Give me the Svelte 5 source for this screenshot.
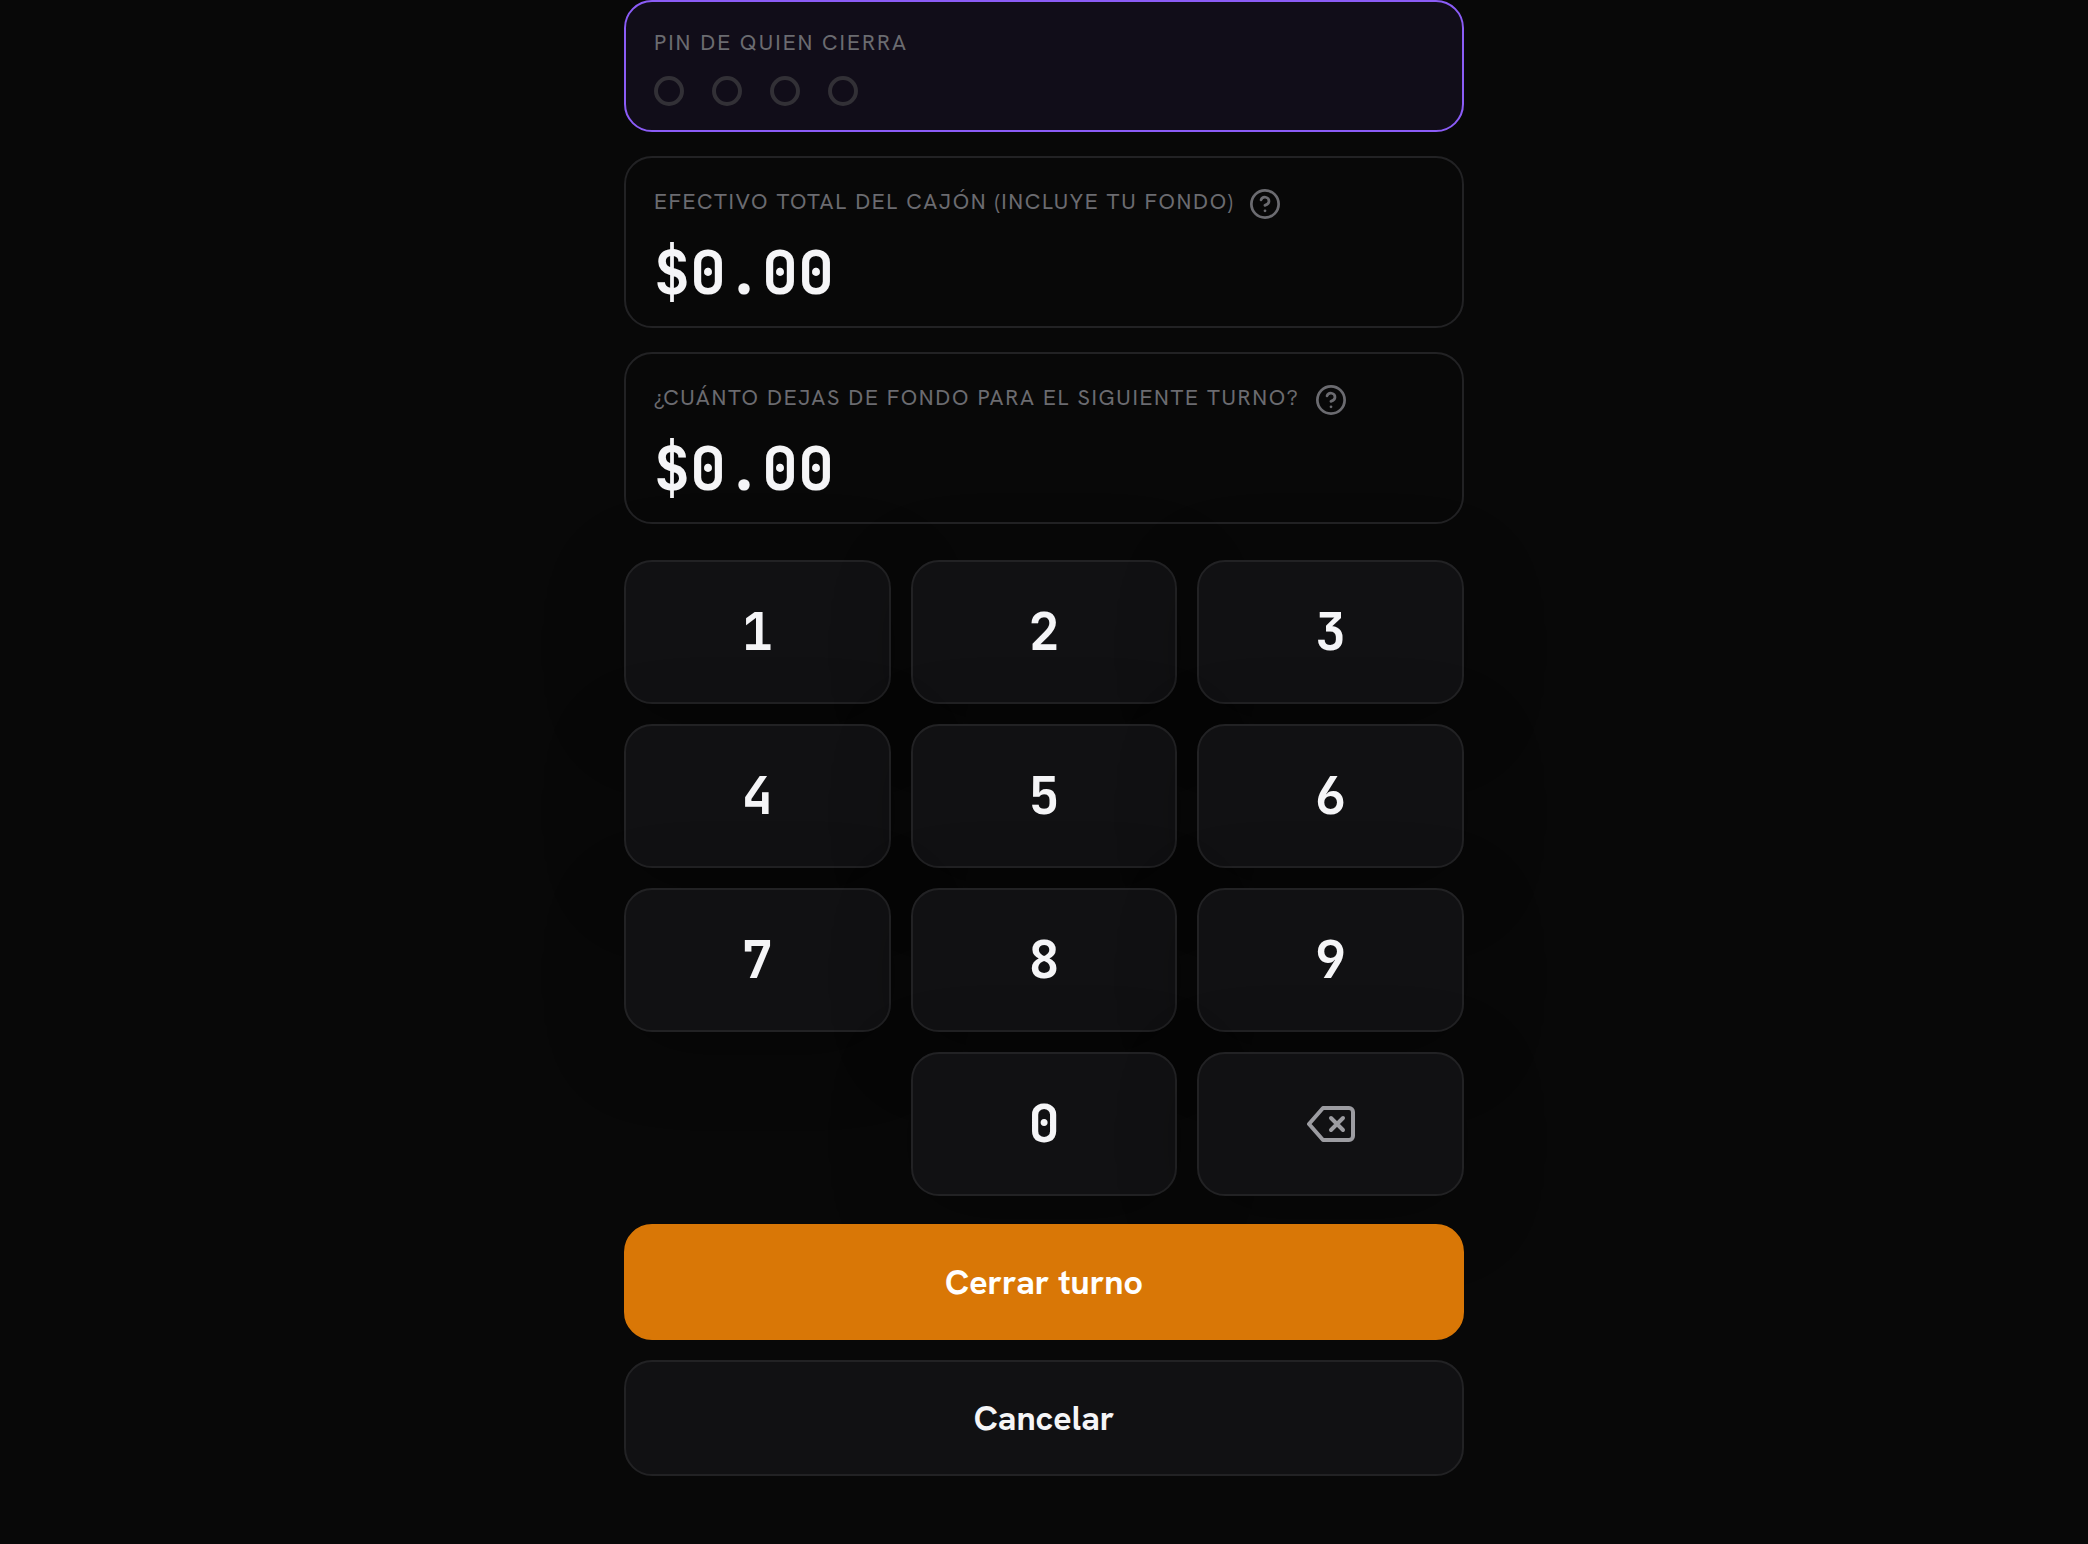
<script lang="ts">
  type Field = "pin" | "cash" | "float";

  const keys = ["1", "2", "3", "4", "5", "6", "7", "8", "9"];
  const pinLength = 4;

  let active: Field = $state("pin");
  let pin = $state("");
  let cents = $state({ cash: 0, float: 0 });

  const amounts: { id: "cash" | "float"; label: string; help: string }[] = [
    {
      id: "cash",
      label: "Efectivo total del cajón (incluye tu fondo)",
      help: "Ayuda sobre el efectivo total",
    },
    {
      id: "float",
      label: "¿Cuánto dejas de fondo para el siguiente turno?",
      help: "Ayuda sobre el fondo",
    },
  ];

  function money(value: number): string {
    return "$" + (value / 100).toFixed(2);
  }

  function press(key: string): void {
    if (active === "pin") {
      if (pin.length < pinLength) pin += key;
    } else if (cents[active] < 10000000) {
      cents[active] = cents[active] * 10 + Number(key);
    }
  }

  function erase(): void {
    if (active === "pin") pin = pin.slice(0, -1);
    else cents[active] = Math.floor(cents[active] / 10);
  }

  function reset(): void {
    pin = "";
    cents = { cash: 0, float: 0 };
    active = "pin";
  }
</script>

<main class="shift">
  <div class="fields">
    <button type="button" class="field pin" class:active={active === "pin"} onclick={() => (active = "pin")}>
      <span class="label">PIN de quien cierra</span>
      <span class="dots">
        {#each Array(pinLength) as _, i}
          <span class="dot" class:filled={i < pin.length}></span>
        {/each}
      </span>
    </button>

    {#each amounts as amount}
      <div class="field" class:active={active === amount.id}>
        <div class="label-row">
          <label class="label" for={amount.id}>{amount.label}</label>
          <button type="button" class="help" aria-label={amount.help}>
            <svg viewBox="1 1 22 22" aria-hidden="true">
              <circle cx="12" cy="12" r="10" />
              <path d="M9.09 9a3 3 0 0 1 5.83 1c0 2-3 3-3 3" />
              <path d="M12 17h.01" />
            </svg>
          </button>
        </div>
        <input id={amount.id} class="amount" readonly value={money(cents[amount.id])} onfocus={() => (active = amount.id)} />
      </div>
    {/each}
  </div>

  <div class="keypad">
    {#each keys as key}
      <button type="button" class="key" onclick={() => press(key)}>{key}</button>
    {/each}
    <button type="button" class="key zero" onclick={() => press("0")}>0</button>
    <button type="button" class="key" aria-label="Borrar" onclick={erase}>
      <svg class="erase" viewBox="0 0 48 36" aria-hidden="true">
        <path d="M16 2h26a4 4 0 0 1 4 4v24a4 4 0 0 1-4 4H16L2 18z" />
        <path d="M24 12l12 12M36 12L24 24" />
      </svg>
    </button>
  </div>

  <div class="actions">
    <button type="button" class="action primary">Cerrar turno</button>
    <button type="button" class="action" onclick={reset}>Cancelar</button>
  </div>
</main>

<style>
  :global(body) {
    margin: 0;
    background: #080808;
  }
  .shift {
    max-width: 840px;
    margin: 0 auto;
    padding-bottom: 68px;
    color: #f5f5f7;
    font-family: "Hanken Grotesk", Inter, sans-serif;
  }
  button {
    margin: 0;
    color: inherit;
    font-family: inherit;
    cursor: pointer;
  }
  svg {
    display: block;
    fill: none;
    stroke: currentColor;
    stroke-linecap: round;
    stroke-linejoin: round;
  }
  .fields {
    display: flex;
    flex-direction: column;
    gap: 24px;
  }
  .field {
    padding: 24px 28px;
    background: transparent;
    border: 2px solid #222224;
    border-radius: 28px;
    text-align: left;
  }
  .field.active {
    background: #110d19;
    border-color: #8b5cf6;
  }
  .label {
    display: block;
    color: #6b6b70;
    font-size: 22px;
    line-height: 34px;
    letter-spacing: 0.075em;
    text-transform: uppercase;
  }
  .pin .label {
    letter-spacing: 2px;
  }
  .dots {
    display: flex;
    gap: 28px;
    margin-top: 16px;
  }
  .dot {
    box-sizing: border-box;
    width: 30px;
    height: 30px;
    border: 4px solid #323036;
    border-radius: 50%;
  }
  .dot.filled {
    background: #8b5cf6;
    border-color: #8b5cf6;
  }
  .label-row {
    display: flex;
    align-items: flex-end;
    gap: 16px;
    padding-top: 3px;
  }
  .help {
    padding: 0;
    background: none;
    border: 0;
    color: #6b6b70;
  }
  .help svg {
    width: 30px;
    height: 30px;
    stroke-width: 2;
  }
  .amount {
    display: block;
    box-sizing: border-box;
    width: 100%;
    height: 60px;
    margin-top: 23px;
    padding: 0;
    background: none;
    border: 0;
    outline: none;
    color: inherit;
    font: bold 60px/60px "JetBrains Mono", "DejaVu Sans Mono", monospace;
  }
  .keypad {
    display: grid;
    grid-template-columns: repeat(3, 1fr);
    gap: 20px;
    margin: 36px 0 28px;
  }
  .key {
    display: flex;
    align-items: center;
    justify-content: center;
    height: 144px;
    padding: 0;
    background: #111113;
    border: 2px solid #222224;
    border-radius: 28px;
    box-shadow: 0 16px 80px rgba(0, 0, 0, 0.3);
    font: bold 52px/60px "JetBrains Mono", "DejaVu Sans Mono", monospace;
  }
  .zero {
    grid-column: 2;
  }
  .erase {
    width: 48px;
    height: 36px;
    color: #9c9ca1;
    stroke-width: 4;
  }
  .actions {
    display: flex;
    flex-direction: column;
    gap: 20px;
  }
  .action {
    height: 116px;
    background: #111113;
    border: 2px solid #222224;
    border-radius: 28px;
    font-size: 34px;
    font-weight: 700;
  }
  .primary {
    background: #d97706;
    border-color: #d97706;
    color: #fff;
  }
</style>
